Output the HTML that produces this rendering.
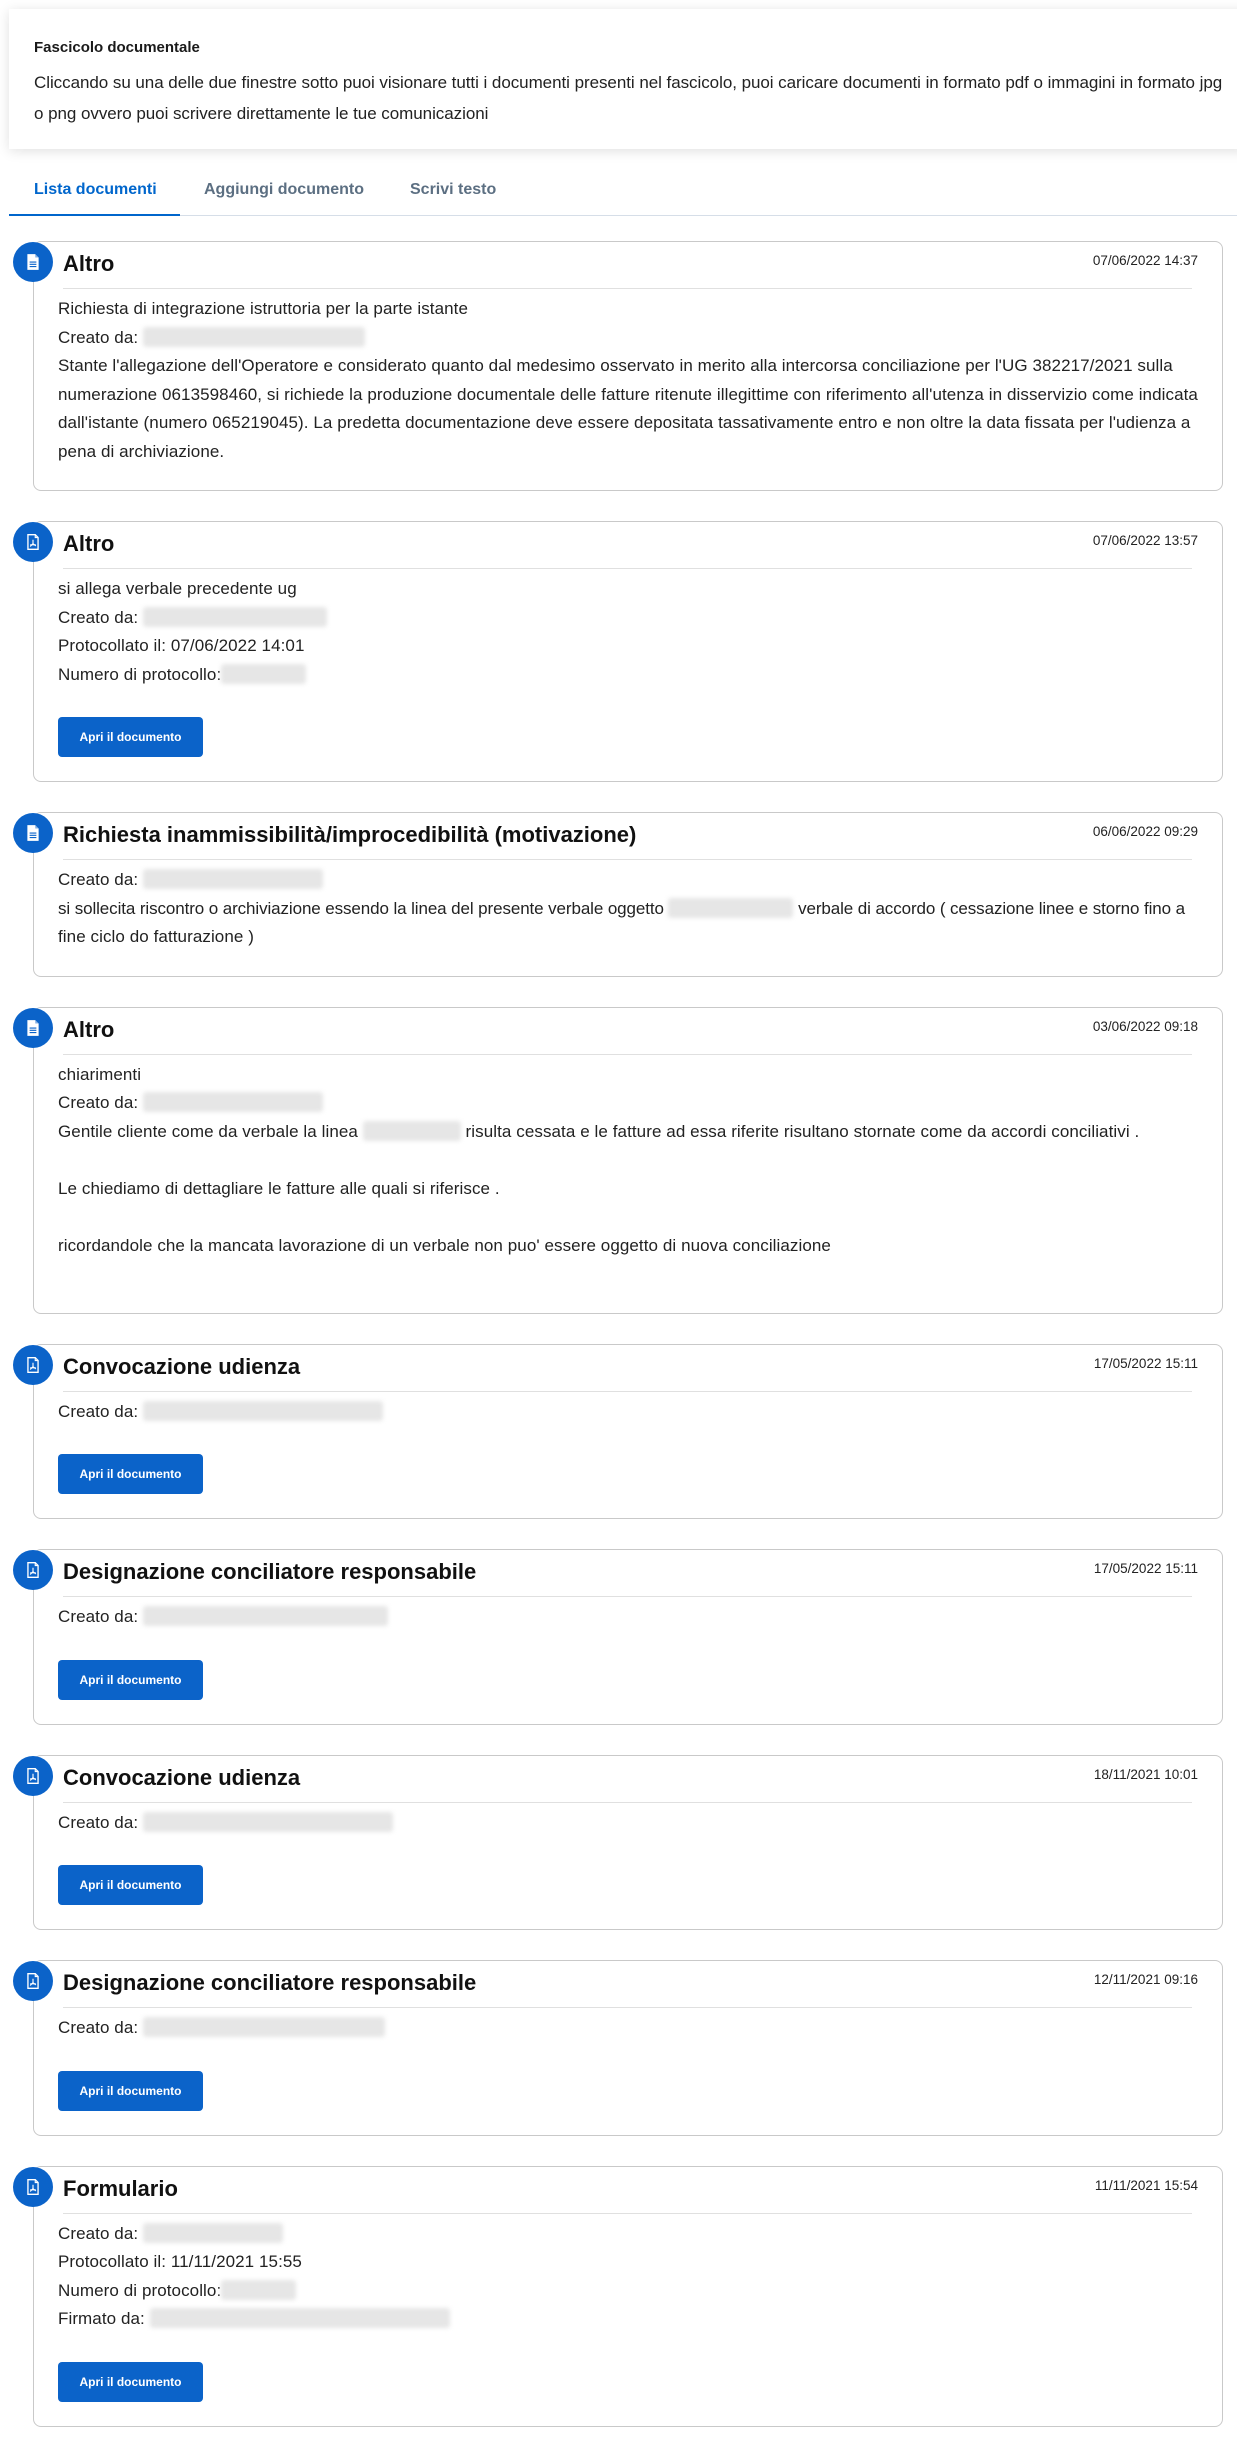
<!DOCTYPE html>
<html><head><meta charset="utf-8">
<style>
*{box-sizing:border-box;margin:0;padding:0}
body{width:1237px;height:2408px;background:#fff;font-family:"Liberation Sans",sans-serif;color:#1c1c1c;overflow:hidden;position:relative}
.hdr{position:absolute;left:9px;top:9px;width:1240px;height:140px;background:#fff;box-shadow:0 2px 12px rgba(0,0,0,.12);padding:29px 0 0 25px}
.hdr h4{font-size:15px;font-weight:bold;color:#1a1a1a;line-height:20px}
.hdr p{font-size:17px;line-height:31px;margin-top:9px;color:#222;white-space:nowrap;letter-spacing:-0.05px}
.tabs{position:absolute;left:9px;top:170px;width:1228px;height:46px;border-bottom:1px solid #d6dee8}
.tab{position:absolute;top:11px;font-size:16px;font-weight:bold;color:#5c6f82}
.tab.a{color:#0066cc}
.uline{position:absolute;left:0;bottom:-1px;width:171px;height:2px;background:#0066cc}
.list{position:absolute;left:33px;top:241px;width:1190px}
.card{position:relative;border:1px solid #c9c9c9;border-radius:8px;margin-bottom:30px;padding:0 24px 24px 24px}
.ic{position:absolute;left:-21px;top:0;width:40px;height:40px;border-radius:50%;background:#0b63c9;display:flex;align-items:center;justify-content:center}
.hd{height:47px;margin-left:5px;border-bottom:1px solid #e0e0e0;position:relative;margin-right:6px}
.hd h3{font-size:22px;font-weight:bold;line-height:26px;padding-top:9px;color:#111}
.dt{position:absolute;right:-6px;top:11px;font-size:13.5px;color:#222}
.bd{padding-top:6px;font-size:17px;line-height:28.5px;color:#222;white-space:nowrap;letter-spacing:0.08px}
.bl{display:inline-block;height:20px;vertical-align:-4px;background:#e6e6e6;filter:blur(2px);border-radius:3px}
.btn{display:inline-block;margin-top:28px;width:145px;height:40px;background:#0b63c9;color:#fff;font-size:12px;font-weight:bold;line-height:40px;text-align:center;border-radius:4px}
</style></head><body>
<div class="hdr"><h4>Fascicolo documentale</h4>
<p>Cliccando su una delle due finestre sotto puoi visionare tutti i documenti presenti nel fascicolo, puoi caricare documenti in formato pdf o immagini in formato jpg<br>o png ovvero puoi scrivere direttamente le tue comunicazioni</p></div>
<div class="tabs"><span class="tab a" style="left:25px">Lista documenti</span><span class="tab" style="left:195px">Aggiungi documento</span><span class="tab" style="left:401px">Scrivi testo</span><div class="uline"></div></div>

<svg width="0" height="0" style="position:absolute"><defs>
<symbol id="doc" viewBox="0 0 16 16"><path d="M3 1h7l3 3v11H3z" fill="#fff"/><path d="M10 1v3h3" fill="#0b63c9" opacity=".5"/><path d="M5 8h6M5 10h6M5 12h6" stroke="#0b63c9" stroke-width="1"/></symbol>
<symbol id="pdf" viewBox="0 0 16 16"><path d="M3.5 1.5h6.5l2.5 2.5v10.5h-9z" fill="none" stroke="#fff" stroke-width="1.2"/><path d="M10 1.5v2.5h2.5" fill="none" stroke="#fff" stroke-width="1"/><path d="M8 6v3.5l-2.5 2.5M8 9.5l2.5 2M5.5 10.5h5" fill="none" stroke="#fff" stroke-width="1"/></symbol>
</defs></svg>

<div class="list">
<div class="card"><div class="ic"><svg width="18" height="18"><use href="#doc"/></svg></div>
<div class="hd"><h3>Altro</h3><span class="dt">07/06/2022 14:37</span></div>
<div class="bd">Richiesta di integrazione istruttoria per la parte istante<br>Creato da: <span class="bl" style="width:222px"></span><br>Stante l'allegazione dell'Operatore e considerato quanto dal medesimo osservato in merito alla intercorsa conciliazione per l'UG 382217/2021 sulla<br>numerazione 0613598460, si richiede la produzione documentale delle fatture ritenute illegittime con riferimento all'utenza in disservizio come indicata<br>dall'istante (numero 065219045). La predetta documentazione deve essere depositata tassativamente entro e non oltre la data fissata per l'udienza a<br>pena di archiviazione.</div></div>

<div class="card"><div class="ic"><svg width="18" height="18"><use href="#pdf"/></svg></div>
<div class="hd"><h3>Altro</h3><span class="dt">07/06/2022 13:57</span></div>
<div class="bd">si allega verbale precedente ug<br>Creato da: <span class="bl" style="width:184px"></span><br>Protocollato il: 07/06/2022 14:01<br>Numero di protocollo:<span class="bl" style="width:85px"></span></div>
<span class="btn">Apri il documento</span></div>

<div class="card"><div class="ic"><svg width="18" height="18"><use href="#doc"/></svg></div>
<div class="hd"><h3>Richiesta inammissibilità/improcedibilità (motivazione)</h3><span class="dt">06/06/2022 09:29</span></div>
<div class="bd">Creato da: <span class="bl" style="width:180px"></span><br><span style="letter-spacing:-0.1px">si sollecita riscontro o archiviazione essendo la linea del presente verbale oggetto <span class="bl" style="width:125px"></span> verbale di accordo ( cessazione linee e storno fino a</span><br>fine ciclo do fatturazione )</div></div>

<div class="card"><div class="ic"><svg width="18" height="18"><use href="#doc"/></svg></div>
<div class="hd"><h3>Altro</h3><span class="dt">03/06/2022 09:18</span></div>
<div class="bd">chiarimenti<br>Creato da: <span class="bl" style="width:180px"></span><br>Gentile cliente come da verbale la linea <span class="bl" style="width:98px"></span> risulta cessata e le fatture ad essa riferite risultano stornate come da accordi conciliativi .<br><br>Le chiediamo di dettagliare le fatture alle quali si riferisce .<br><br>ricordandole che la mancata lavorazione di un verbale non puo' essere oggetto di nuova conciliazione<br>&nbsp;</div></div>

<div class="card"><div class="ic"><svg width="18" height="18"><use href="#pdf"/></svg></div>
<div class="hd"><h3>Convocazione udienza</h3><span class="dt">17/05/2022 15:11</span></div>
<div class="bd">Creato da: <span class="bl" style="width:240px"></span></div>
<span class="btn">Apri il documento</span></div>

<div class="card"><div class="ic"><svg width="18" height="18"><use href="#pdf"/></svg></div>
<div class="hd"><h3>Designazione conciliatore responsabile</h3><span class="dt">17/05/2022 15:11</span></div>
<div class="bd">Creato da: <span class="bl" style="width:245px"></span></div>
<span class="btn">Apri il documento</span></div>

<div class="card"><div class="ic"><svg width="18" height="18"><use href="#pdf"/></svg></div>
<div class="hd"><h3>Convocazione udienza</h3><span class="dt">18/11/2021 10:01</span></div>
<div class="bd">Creato da: <span class="bl" style="width:250px"></span></div>
<span class="btn">Apri il documento</span></div>

<div class="card"><div class="ic"><svg width="18" height="18"><use href="#pdf"/></svg></div>
<div class="hd"><h3>Designazione conciliatore responsabile</h3><span class="dt">12/11/2021 09:16</span></div>
<div class="bd">Creato da: <span class="bl" style="width:242px"></span></div>
<span class="btn">Apri il documento</span></div>

<div class="card"><div class="ic"><svg width="18" height="18"><use href="#pdf"/></svg></div>
<div class="hd"><h3>Formulario</h3><span class="dt">11/11/2021 15:54</span></div>
<div class="bd">Creato da: <span class="bl" style="width:140px"></span><br>Protocollato il: 11/11/2021 15:55<br>Numero di protocollo:<span class="bl" style="width:75px"></span><br>Firmato da: <span class="bl" style="width:300px"></span></div>
<span class="btn">Apri il documento</span></div>
</div>
</body></html>
